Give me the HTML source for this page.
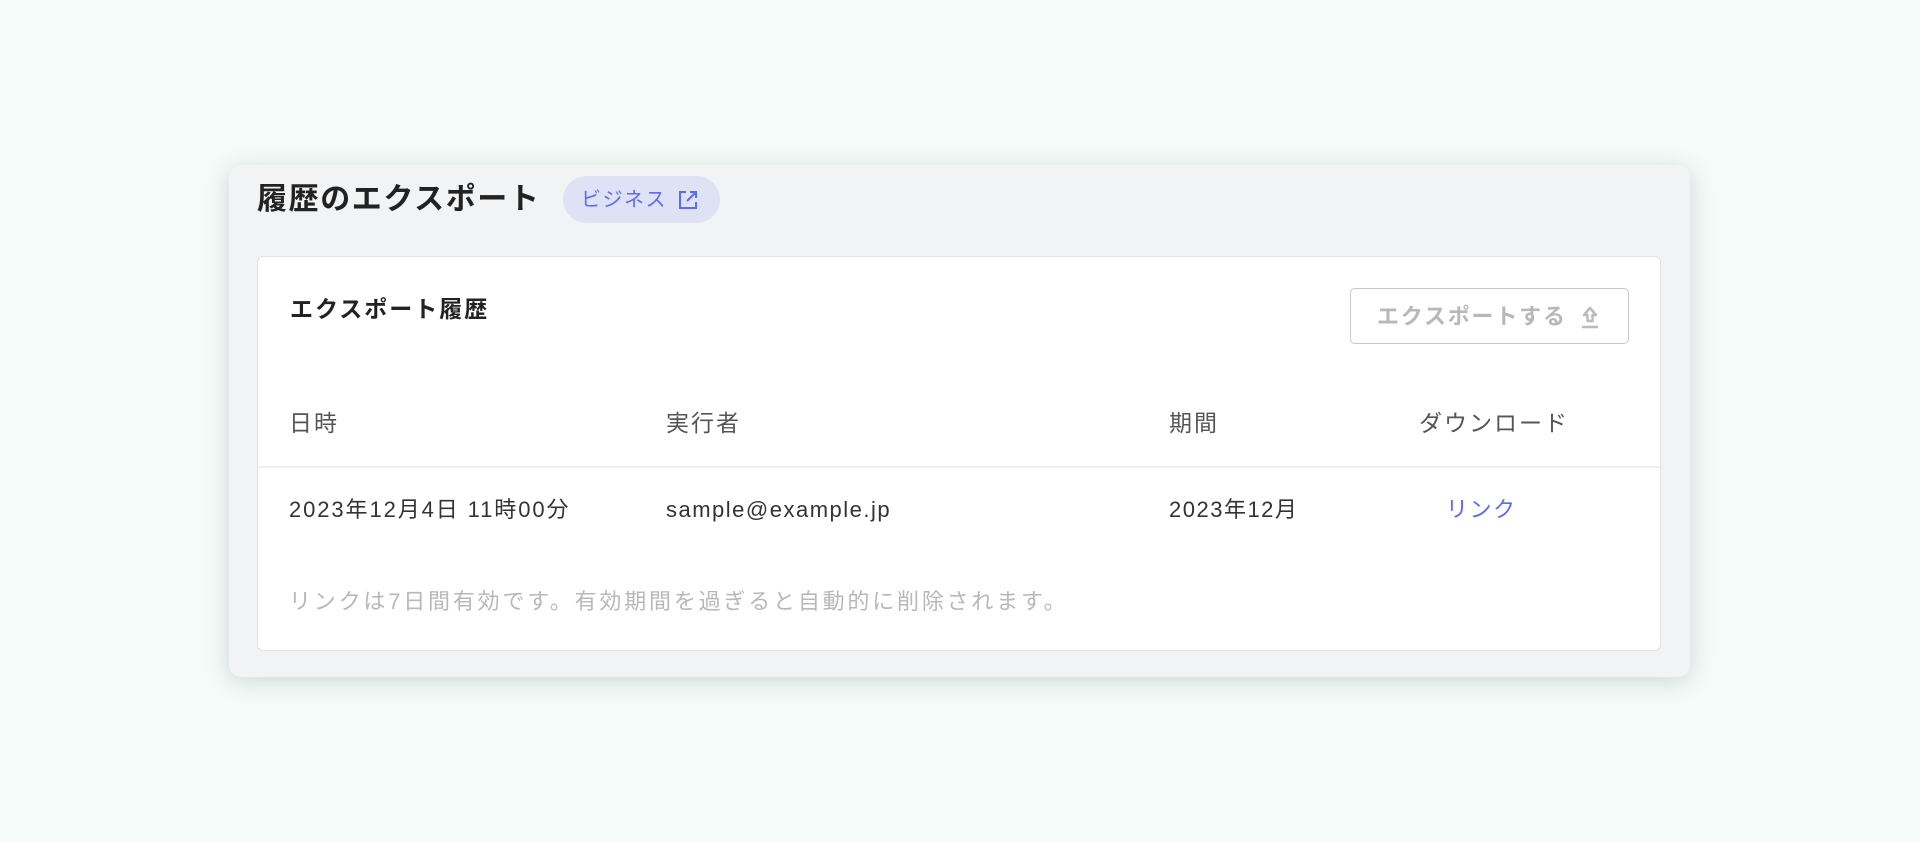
<!DOCTYPE html>
<html><head><meta charset="utf-8"><style>
*{margin:0;padding:0;box-sizing:border-box}
body{width:1920px;height:842px;background:#f5fbf9;font-family:"Liberation Sans","Noto Sans CJK JP",sans-serif;position:relative;overflow:hidden}
.card{position:absolute;left:229px;top:165px;width:1461px;height:512px;background:#f2f3f5;border-radius:12px;box-shadow:0 4px 24px rgba(60,90,80,.22)}
.a{position:absolute;white-space:nowrap}
.inner{position:absolute;left:257px;top:256px;width:1404px;height:395px;background:#fff;border:1px solid #e0e2e6;border-radius:6px}
.h{font-size:23px;line-height:30px;color:#555;letter-spacing:2px}
.d{font-size:22px;line-height:30px;color:#333;letter-spacing:1.5px}
</style></head><body>
<div class="card"></div>
<div class="a" style="left:257px;top:180px;font-size:30px;line-height:40px;font-weight:bold;color:#222;letter-spacing:1.6px">履歴のエクスポート</div>
<div class="a" style="left:563px;top:176px;width:157px;height:47px;border-radius:24px;background:#dfe2f5"></div>
<div class="a" style="left:581px;top:186px;font-size:20px;line-height:28px;color:#5b6cf0;letter-spacing:1.5px">ビジネス</div>
<svg class="a" style="left:677px;top:189px" width="22" height="22" viewBox="0 0 22 22" fill="none" stroke="#5b6cf0" stroke-width="2"><path d="M9 3H3v16h16v-6"/><path d="M13 3h6v6M19 3l-9 9"/></svg>
<div class="inner"></div>
<div class="a" style="left:290px;top:293px;font-size:23px;line-height:32px;font-weight:bold;color:#222;letter-spacing:2px">エクスポート履歴</div>
<div class="a" style="left:1350px;top:288px;width:279px;height:56px;border:1px solid #c8c8c8;border-radius:5px"></div>
<div class="a" style="left:1377px;top:301px;font-size:22px;line-height:32px;color:#b8b8b8;letter-spacing:1.8px;font-weight:bold">エクスポートする</div>
<svg class="a" style="left:1580px;top:306px" width="20" height="24" viewBox="0 0 20 24" fill="none" stroke="#bbb" stroke-width="2.5"><path d="M10 2L4 9h3.5v6h5V9H16z" stroke-linejoin="round"/><path d="M2 21h16"/></svg>
<div class="a h" style="left:289px;top:408px">日時</div>
<div class="a h" style="left:666px;top:408px">実行者</div>
<div class="a h" style="left:1169px;top:408px">期間</div>
<div class="a h" style="left:1419px;top:408px">ダウンロード</div>
<div class="a" style="left:258px;top:466px;width:1402px;height:2px;background:#eceef0"></div>
<div class="a d" style="left:289px;top:495px;letter-spacing:1.9px">2023年12月4日 11時00分</div>
<div class="a d" style="left:666px;top:495px">sample@example.jp</div>
<div class="a d" style="left:1169px;top:495px">2023年12月</div>
<div class="a" style="left:1446px;top:495px;font-size:22px;line-height:30px;color:#5b6cf0;letter-spacing:1.5px">リンク</div>
<div class="a" style="left:289px;top:587px;font-size:22px;line-height:30px;color:#b8b8b8;letter-spacing:2.8px">リンクは7日間有効です。有効期間を過ぎると自動的に削除されます。</div>
</body></html>
